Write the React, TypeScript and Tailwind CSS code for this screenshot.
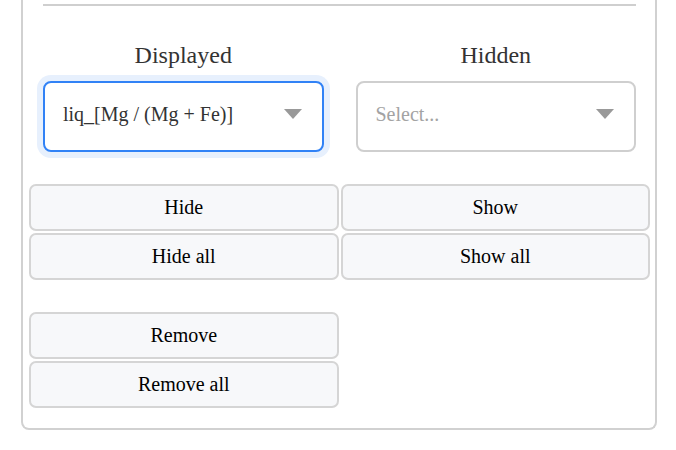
import React from 'react';

const serif = { fontFamily: '"Liberation Serif", "Times New Roman", serif' };

const Caret: React.FC = () => (
  <svg width="18" height="10" viewBox="0 0 18 10" className="shrink-0">
    <path d="M0 0 L18 0 L9 10 Z" fill="#999999" />
  </svg>
);

interface SelectBoxProps {
  value?: string;
  placeholder?: string;
  focused?: boolean;
}

const SelectBox: React.FC<SelectBoxProps> = ({ value, placeholder, focused }) => (
  <div
    className={
      focused
        ? 'h-[71px] rounded-[8px] border-2 border-[#3182f6] shadow-[0_0_0_6px_#e7f0fd] bg-white flex items-center pl-[18px] pr-[20px] pb-[6px]'
        : 'h-[71px] rounded-[8px] border-2 border-[#cfcfcf] bg-white flex items-center pl-[18px] pr-[20px] pb-[6px]'
    }
  >
    <span className={value ? 'flex-1 text-[20px] text-[#333333]' : 'flex-1 text-[20px] text-[#a3a3a3]'}>
      {value ?? placeholder}
    </span>
    <Caret />
  </div>
);

const Btn: React.FC<{ label: string }> = ({ label }) => (
  <button className="h-[47px] w-full rounded-[7px] border-2 border-[#d5d5d5] bg-[#f7f8fa] text-[20px] text-black flex items-center justify-center pb-[1px]">
    {label}
  </button>
);

export default function App() {
  return (
    <div className="w-full h-[450px] bg-white" style={serif}>
      <div className="ml-[21px] w-[636px] h-[430px] border-2 border-t-0 border-[#d1d1d1] rounded-b-[8px] pl-[6px] pr-[5px]">
        <div className="pt-[4px] px-[14px]">
          <div className="h-[2px] bg-[#cfcfcf]" />
        </div>

        <div className="grid grid-cols-2 gap-[32px] px-[14px] mt-[35px]">
          <div className="flex flex-col">
            <div className="text-[24px] leading-[28px] text-[#333333] text-center">Displayed</div>
            <div className="mt-[12px]">
              <SelectBox value="liq_[Mg / (Mg + Fe)]" focused />
            </div>
          </div>
          <div className="flex flex-col">
            <div className="text-[24px] leading-[28px] text-[#333333] text-center">Hidden</div>
            <div className="mt-[12px]">
              <SelectBox placeholder="Select..." />
            </div>
          </div>
        </div>

        <div className="grid grid-cols-2 gap-[2px] mt-[32px]">
          <Btn label="Hide" />
          <Btn label="Show" />
          <Btn label="Hide all" />
          <Btn label="Show all" />
        </div>

        <div className="grid grid-cols-2 gap-[2px] mt-[32px]">
          <Btn label="Remove" />
          <div />
          <Btn label="Remove all" />
        </div>
      </div>
    </div>
  );
}
